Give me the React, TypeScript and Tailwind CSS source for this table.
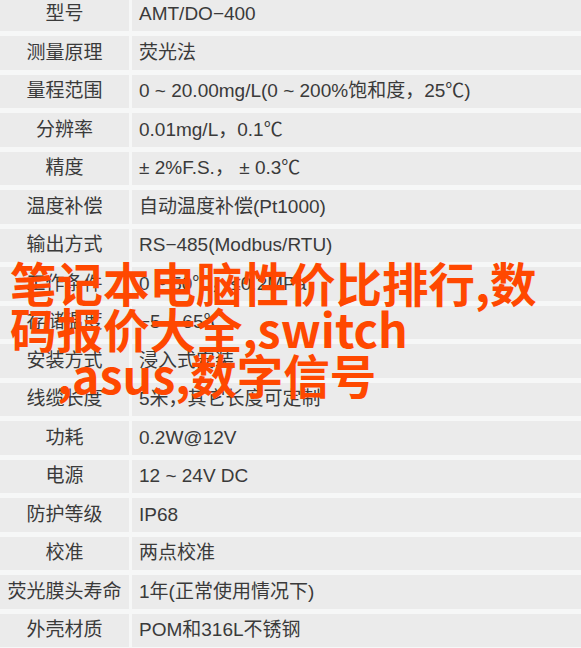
import React from 'react';

const specs: [string, string][] = [
  ['型号', 'AMT/DO−400'],
  ['测量原理', '荧光法'],
  ['量程范围', '0 ~ 20.00mg/L(0 ~ 200%饱和度，25℃)'],
  ['分辨率', '0.01mg/L，0.1℃'],
  ['精度', '± 2%F.S.， ± 0.3℃'],
  ['温度补偿', '自动温度补偿(Pt1000)'],
  ['输出方式', 'RS−485(Modbus/RTU)'],
  ['工作条件', '0 ~ 50℃，≤0.2MPa'],
  ['存储温度', '−5 ~ 65℃'],
  ['安装方式', '浸入式安装'],
  ['线缆长度', '5米，其它长度可定制'],
  ['功耗', '0.2W@12V'],
  ['电源', '12 ~ 24V DC'],
  ['防护等级', 'IP68'],
  ['校准', '两点校准'],
  ['荧光膜头寿命', '1年(正常使用情况下)'],
  ['外壳材质', 'POM和316L不锈钢'],
];

export default function App() {
  return (
    <div className="relative w-[581px] h-[648px] overflow-hidden bg-[#f6f7f7]">
      {/* spec table */}
      <div
        className="flex flex-col gap-[5px] -mt-[2.5px] text-[19px] text-[#3a3a3a]"
        style={{ fontFamily: '"Liberation Sans", "Noto Sans CJK SC", sans-serif' }}
      >
        {specs.map(([label, value]) => (
          <div key={label} className="grid grid-cols-[129px_1fr] gap-[3px] h-[33.5px]">
            <div className="bg-[#ebebeb] flex items-center justify-center whitespace-nowrap">{label}</div>
            <div className="bg-[#ebebeb] flex items-center pl-[7px] whitespace-pre">{value}</div>
          </div>
        ))}
      </div>

      {/* headline overlay */}
      <div
        className="absolute left-[10px] top-[259px] text-[46.5px] leading-[46px] font-bold text-[#ff4800] whitespace-nowrap"
        style={{ fontFamily: '"Noto Sans CJK SC", "Noto Sans", sans-serif' }}
      >
        <div>笔记本电脑性价比排行,数</div>
        <div>码报价大全,switch</div>
        <div className="pl-[47px]">,asus,数字信号</div>
      </div>
    </div>
  );
}
